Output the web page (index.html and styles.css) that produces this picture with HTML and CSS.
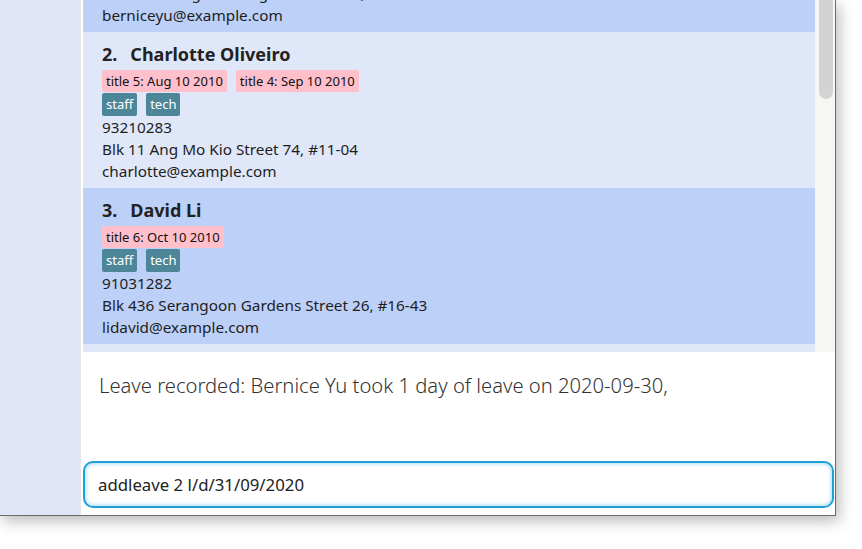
FILE: index.html
```html
<!DOCTYPE html>
<html>
<head>
<meta charset="utf-8">
<link rel="stylesheet" href="styles.css">
</head>
<body>
<div class="window">
  <aside class="sidebar"></aside>
  <div class="divider"></div>
  <main class="main">
    <section class="list-pane">
      <div class="list-viewport">
        <div class="list">
          <article class="card card-odd card-cut">
            <div class="name"><span class="idx">1.</span>Bernice Yu</div>
            <div class="tags"><span class="tag leave">title 1: Jun 10 2010</span></div>
            <div class="tags"><span class="tag cat">colleagues</span><span class="tag cat">friends</span></div>
            <div class="line">99272758</div>
            <div class="line">Blk 30 Lorong 3 Serangoon Gardens, #07-18</div>
            <div class="line">berniceyu@example.com</div>
          </article>
          <article class="card card-even">
            <div class="name"><span class="idx">2.</span>Charlotte Oliveiro</div>
            <div class="tags"><span class="tag leave">title 5: Aug 10 2010</span><span class="tag leave">title 4: Sep 10 2010</span></div>
            <div class="tags"><span class="tag cat">staff</span><span class="tag cat">tech</span></div>
            <div class="line">93210283</div>
            <div class="line">Blk 11 Ang Mo Kio Street 74, #11-04</div>
            <div class="line">charlotte@example.com</div>
          </article>
          <article class="card card-odd">
            <div class="name"><span class="idx">3.</span>David Li</div>
            <div class="tags"><span class="tag leave">title 6: Oct 10 2010</span></div>
            <div class="tags"><span class="tag cat">staff</span><span class="tag cat">tech</span></div>
            <div class="line">91031282</div>
            <div class="line">Blk 436 Serangoon Gardens Street 26, #16-43</div>
            <div class="line">lidavid@example.com</div>
          </article>
        </div>
      </div>
      <div class="scrollbar"><div class="thumb"></div></div>
    </section>
    <section class="result">Leave recorded: Bernice Yu took 1 day of leave on 2020-09-30,</section>
    <div class="command">addleave 2 l/d/31/09/2020</div>
  </main>
</div>
</body>
</html>
```
FILE: styles.css
```css
* { box-sizing: border-box; }
html, body { margin: 0; padding: 0; background: #ffffff; }
body {
  width: 862px;
  height: 549px;
  overflow: hidden;
  font-family: "Noto Sans", "Open Sans", sans-serif;
  color: #1e1e1e;
}
.window {
  display: flex;
  width: 836px;
  height: 516px;
  background: #ffffff;
  border-right: 1px solid #6c6c6c;
  border-bottom: 1px solid #6c6c6c;
  box-shadow: 3px 5px 14px rgba(0, 0, 0, 0.28);
}
.sidebar {
  width: 79px;
  flex: none;
  background: #e0e6f8;
}
.divider {
  width: 2px;
  flex: none;
  background: #e6e6e8;
}
.main {
  flex: 1;
  display: flex;
  flex-direction: column;
  padding-left: 2px;
  min-width: 0;
}
.list-pane {
  height: 352px;
  flex: none;
  display: flex;
}
.list-viewport {
  flex: 1;
  overflow: hidden;
  background: #e0e7f9;
}
.scrollbar {
  width: 20px;
  flex: none;
  background: #f6f6f2;
  padding: 0 2px 0 4px;
}
.thumb {
  height: 99px;
  background: #d3d3d3;
  border-radius: 0 0 7px 7px;
}
.card {
  padding: 8px 0 7px 19px;
  height: 156px;
}
.card-cut { margin-top: -124px; }
.card-odd { background: #bdd0f7; }
.card-even { background: #e0e7f9; }
.name {
  height: 28px;
  line-height: 28px;
  font-size: 18px;
  font-weight: 700;
  color: #222;
}
.idx { margin-right: 13px; }
.tags {
  display: flex;
  gap: 9px;
  margin-top: 2px;
  height: 22px;
}
.tags + .tags { margin-top: 1px; height: 23px; }
.tag {
  font-size: 13px;
  line-height: 22px;
  padding: 0 4px;
  border-radius: 2px;
}
.leave { background: #ffc0cb; color: #111; }
.cat { background: #4d8699; color: #ffffff; }
.line {
  font-size: 15.3px;
  line-height: 22px;
  height: 22px;
}
.result {
  height: 109px;
  flex: none;
  padding: 20px 0 0 16px;
  font-size: 20.2px;
  font-weight: 300;
  color: #333;
  line-height: 26px;
}
.command {
  margin: 0 1px 0 0;
  height: 47px;
  border: 2px solid #1ca0d6;
  border-radius: 10px;
  box-shadow: inset 0 0 3px 2px rgba(28, 160, 214, 0.25);
  padding: 0 0 0 13px;
  font-size: 16.8px;
  line-height: 43px;
  color: #222;
}
```
